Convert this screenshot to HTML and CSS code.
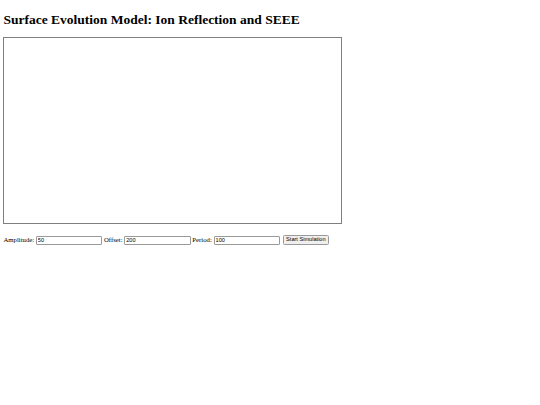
FILE: index.html
```html
<!DOCTYPE html>
<html>
<head>
<meta charset="utf-8">
<title>Surface Evolution Model</title>
<link rel="stylesheet" href="styles.css">
</head>
<body>
<h1 class="title">Surface Evolution Model: Ion Reflection and SEEE</h1>
<div class="canvas"></div>
<div class="controls">
<label class="lbl">Amplitude: <input class="field" type="text" value="50"></label>
<label class="lbl">Offset: <input class="field" type="text" value="200"></label>
<label class="lbl">Period: <input class="field" type="text" value="100"></label>
<button class="btn">Start Simulation</button>
</div>
</body>
</html>
```
FILE: styles.css
```css
html, body {
  background: #ffffff;
}
body {
  margin: 3.4px;
  font-family: "Liberation Serif", "Times New Roman", serif;
  font-size: 6.75px;
  color: #000;
}
.title {
  font-family: "Liberation Serif", "Times New Roman", serif;
  font-size: 13.5px;
  font-weight: bold;
  line-height: 15.5px;
  margin: 9px 0 9px 0;
}
.canvas {
  box-sizing: border-box;
  width: 338.5px;
  height: 187px;
  border: 1px solid #7f7f7f;
}
.controls {
  margin-top: 11px;
  display: flex;
  align-items: center;
  line-height: 9.5px;
  white-space: nowrap;
}
.lbl {
  margin-right: 1.6px;
}
.field {
  box-sizing: border-box;
  width: 66.5px;
  height: 9.5px;
  margin: 0;
  padding: 0 1px;
  border: 1px solid #9a9a9a;
  border-radius: 1px;
  font-family: "Liberation Sans", Arial, sans-serif;
  font-size: 5.6px;
  vertical-align: middle;
  background: #fff;
}
.btn {
  box-sizing: border-box;
  height: 9.5px;
  margin: 0 0 0 1px;
  padding: 0 2.5px;
  border: 1px solid #9a9a9a;
  border-radius: 1.5px;
  background: #efefef;
  font-family: "Liberation Sans", Arial, sans-serif;
  font-size: 5.6px;
  line-height: 7px;
  color: #000;
}
```
